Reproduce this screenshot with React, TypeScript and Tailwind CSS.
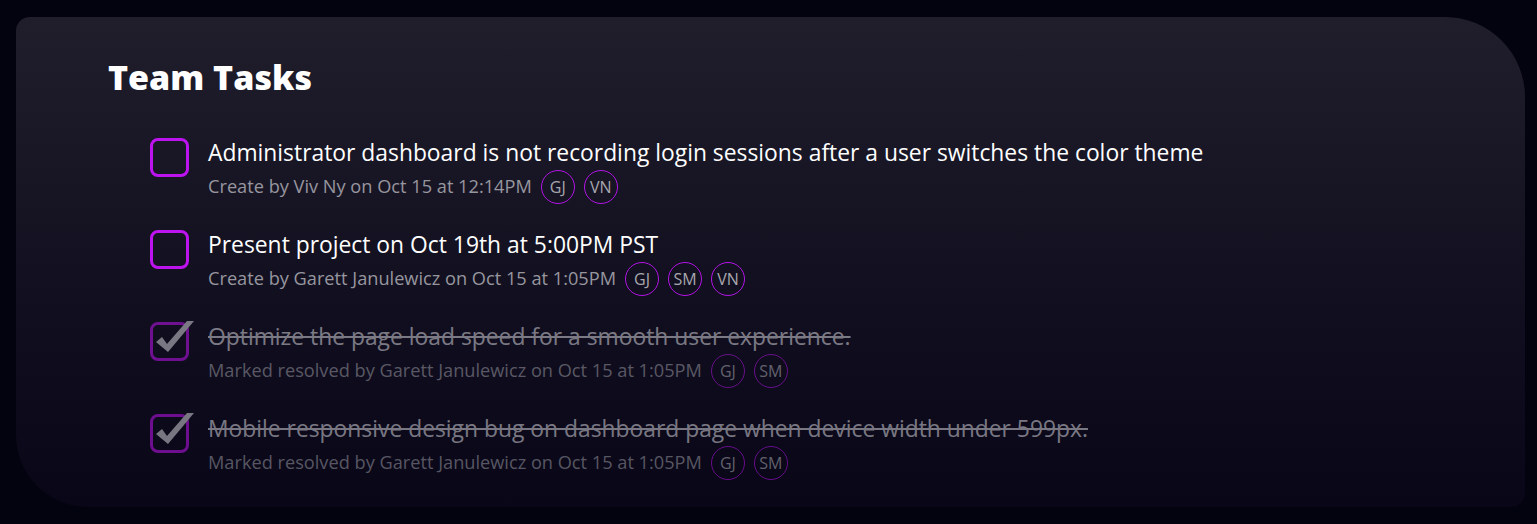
import React from "react";

interface Task {
  title: string;
  meta: string;
  people: string[];
  done: boolean;
}

const tasks: Task[] = [
  {
    title: "Administrator dashboard is not recording login sessions after a user switches the color theme",
    meta: "Create by Viv Ny on Oct 15 at 12:14PM",
    people: ["GJ", "VN"],
    done: false,
  },
  {
    title: "Present project on Oct 19th at 5:00PM PST",
    meta: "Create by Garett Janulewicz on Oct 15 at 1:05PM",
    people: ["GJ", "SM", "VN"],
    done: false,
  },
  {
    title: "Optimize the page load speed for a smooth user experience.",
    meta: "Marked resolved by Garett Janulewicz on Oct 15 at 1:05PM",
    people: ["GJ", "SM"],
    done: true,
  },
  {
    title: "Mobile responsive design bug on dashboard page when device width under 599px.",
    meta: "Marked resolved by Garett Janulewicz on Oct 15 at 1:05PM",
    people: ["GJ", "SM"],
    done: true,
  },
];

const Check = () => (
  <svg className="absolute left-[5px] -top-[1px] w-[44px] h-[32px]" viewBox="0 0 44 32">
    <path d="M1 21 L7 16 L12 23 L32 0 L39 0 L13 31 Z" fill="#d0cfd6" />
  </svg>
);

const TaskRow = ({ task }: { task: Task }) => (
  <div className={`flex gap-[19px] ${task.done ? "opacity-55" : ""}`}>
    <div className="relative shrink-0 w-[39px] h-[39px]">
      <div className="w-full h-full rounded-[8px] border-[3px] border-[#bd13ef]" />
      {task.done && <Check />}
    </div>
    <div className="flex flex-col gap-[2px]">
      <div
        className={`text-[22.85px] leading-[30px] ${
          task.done ? "line-through text-[#d2d1d8]" : "text-white"
        }`}
      >
        {task.title}
      </div>
      <div className="flex items-center gap-[9px] h-[34px]">
        <span className="text-[18.2px] text-[#97969f]">{task.meta}</span>
        {task.people.map((p) => (
          <span
            key={p}
            className="flex items-center justify-center w-[34px] h-[34px] rounded-full border border-[#b313e6] text-[16px] text-[#a8a7ae]"
          >
            {p}
          </span>
        ))}
      </div>
    </div>
  </div>
);

export default function App() {
  return (
    <div
      className="min-h-screen bg-[#03020f] pt-[17px] pl-4 pr-3 pb-[17px]"
      style={{ fontFamily: '"Open Sans", "Noto Sans", sans-serif' }}
    >
      <div className="rounded-tl-[14px] rounded-tr-[80px] rounded-bl-[72px] rounded-br-[14px] bg-gradient-to-b from-[#201e2b] to-[#080617] pl-[92px] pt-[40px] pb-[27px]">
        <h2 className="text-[34px] leading-[40px] font-extrabold text-white">Team Tasks</h2>
        <div className="flex flex-col gap-[26px] pl-[42px] mt-[41px]">
          {tasks.map((t) => (
            <TaskRow key={t.title} task={t} />
          ))}
        </div>
      </div>
    </div>
  );
}
